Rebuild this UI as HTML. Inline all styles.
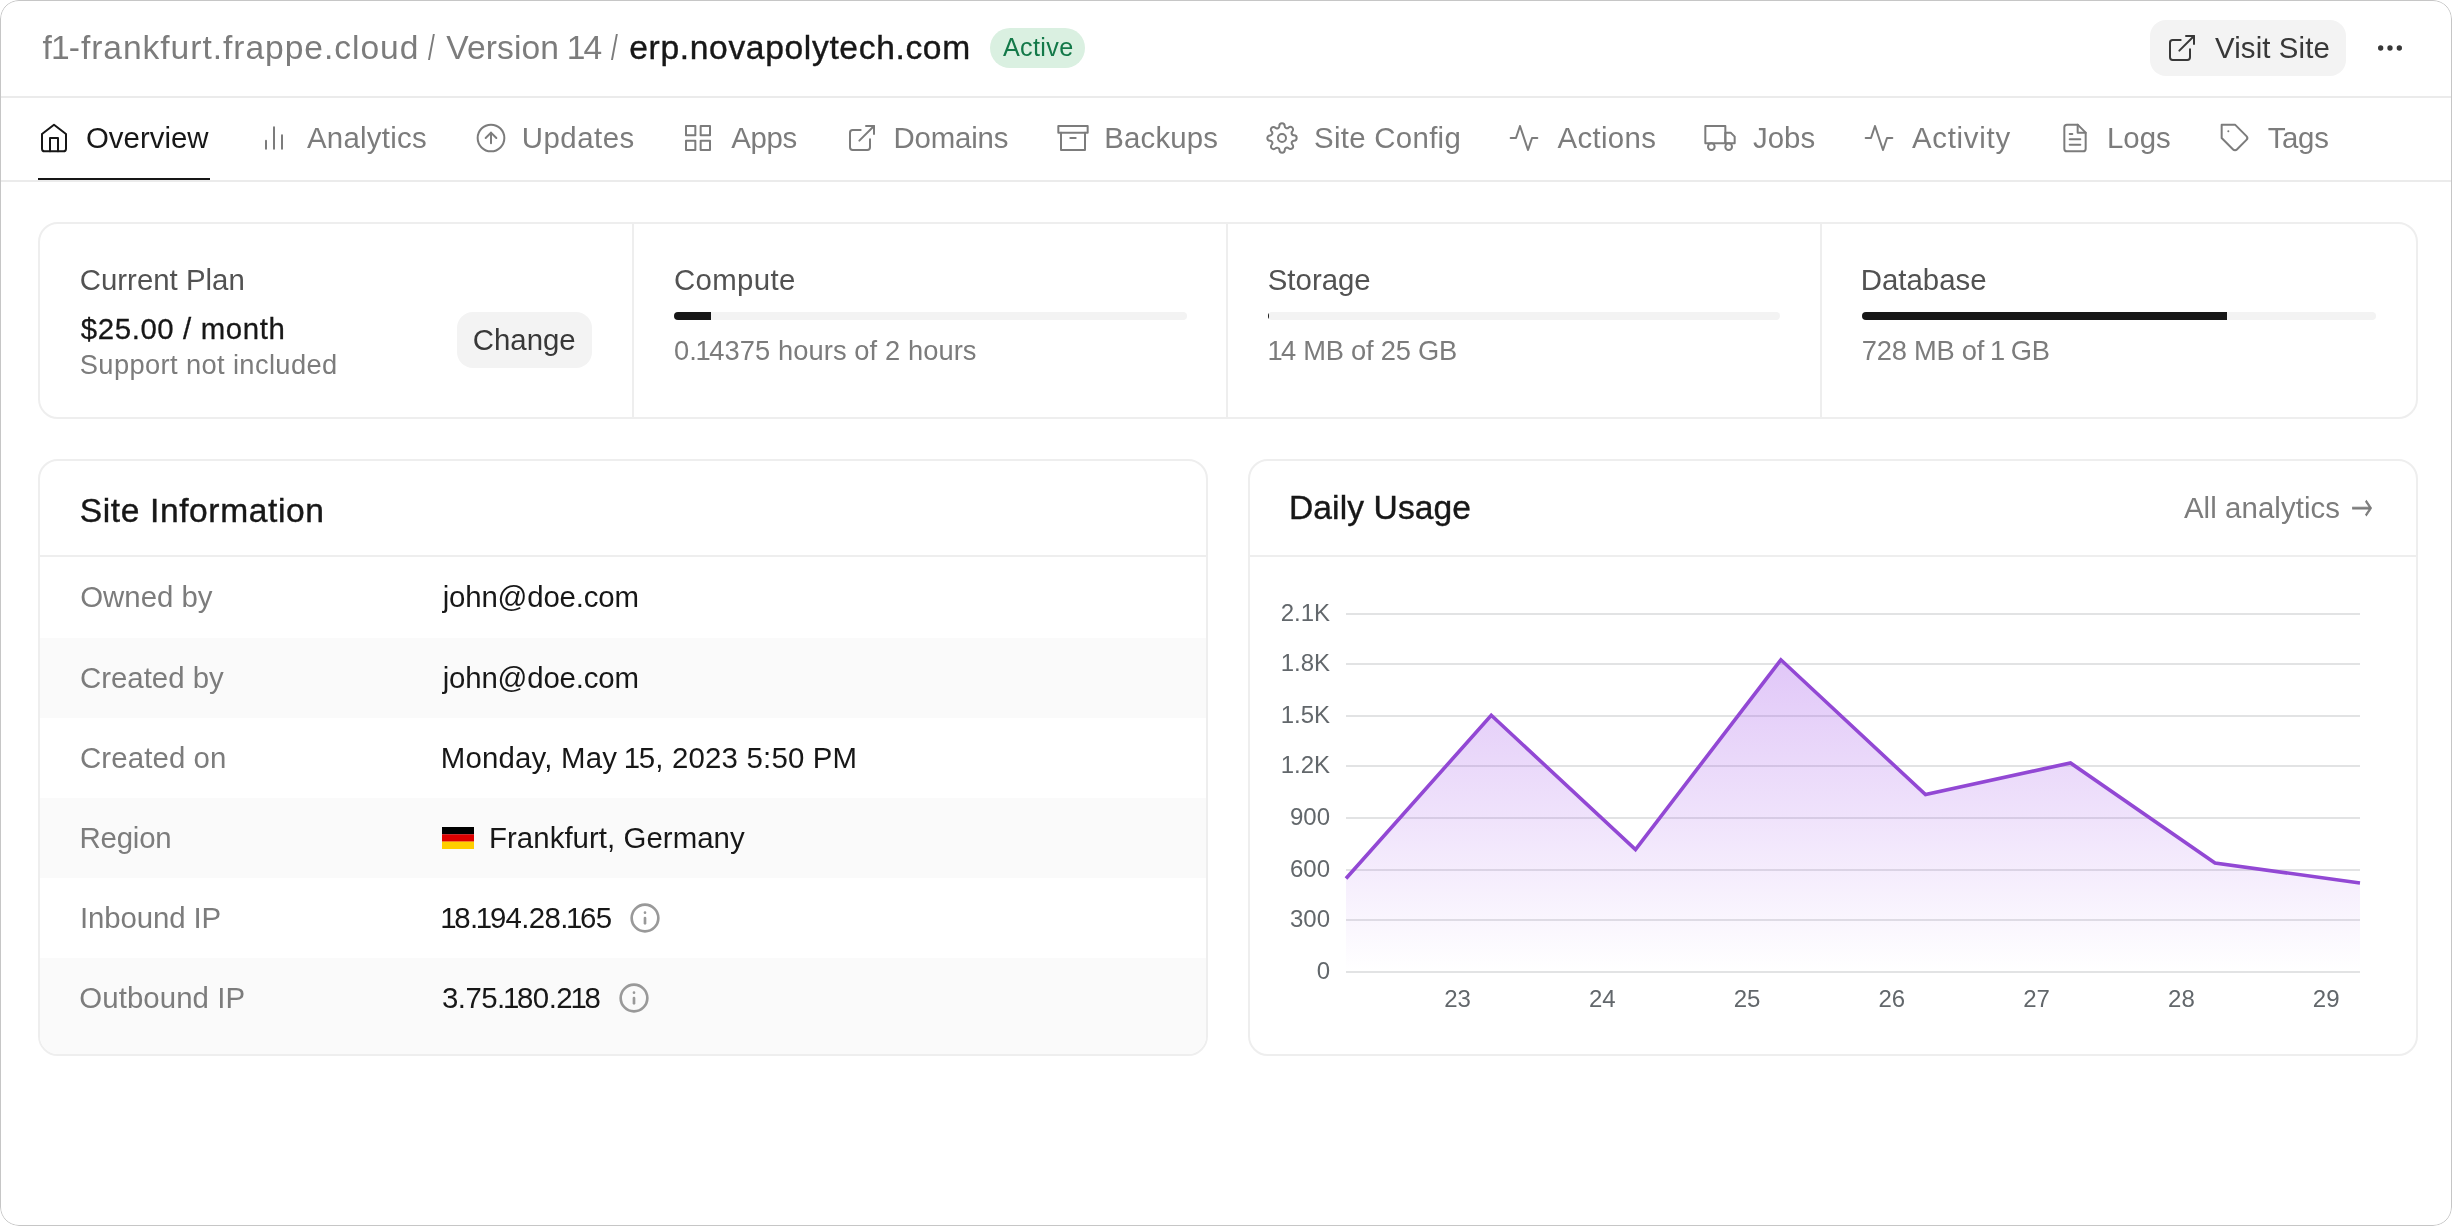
<!DOCTYPE html>
<html lang="en"><head><meta charset="utf-8"><title>erp.novapolytech.com - Overview</title>
<style>
*{box-sizing:border-box;margin:0;padding:0}
html,body{width:2452px;height:1226px;background:#fff;overflow:hidden}
body{font-family:"Liberation Sans",Arial,Helvetica,sans-serif;-webkit-font-smoothing:antialiased}
#app{position:relative;width:2452px;height:1226px;background:transparent;border-radius:19px;overflow:hidden;will-change:transform}
#frame{position:absolute;inset:0;border:1.3px solid #c6c6c6;border-radius:19px;pointer-events:none;z-index:9}
.t{position:absolute;white-space:nowrap;line-height:1}
.n1{margin:0 -0.055em}
.ic{position:absolute;display:block;overflow:visible}
header{position:absolute;left:0;top:0;width:2452px;height:98px;border-bottom:2px solid #ebebeb}
nav{position:absolute;left:0;top:98px;width:2452px;height:84px;border-bottom:2px solid #ebebeb}
nav .active-line{position:absolute;left:38px;top:80px;width:172px;height:2px;background:#171717}
a{color:inherit;text-decoration:none}
.badge{position:absolute;left:990px;top:28px;width:95px;height:40px;border-radius:20px;background:#daf0e1}
.btn{position:absolute;background:#f3f3f3;border-radius:16px}
.card{position:absolute;border:2px solid #eeeeee;border-radius:20px;background:#fff;overflow:hidden}
.vdiv{position:absolute;top:0;width:2px;height:100%;background:#eeeeee}
.bar{position:absolute;height:8px;border-radius:4px;background:#f3f3f3;overflow:hidden}
.bar i{position:absolute;left:0;top:0;height:8px;background:#171717;display:block}
.hdiv{position:absolute;left:0;width:100%;height:2px;background:#eeeeee}
.row-alt{position:absolute;left:0;width:100%;background:#fafafa}
.chart{position:absolute;display:block}
.chart text{font-family:"Liberation Sans",Arial,Helvetica,sans-serif;font-size:24px;fill:#62676b}
.ygrid line{stroke:#e2e3e4;stroke-width:2}
.flag{position:absolute;width:32px;height:22px}
.crumbs,.actions,.tab,.col,.row,.link{display:contents}
</style></head><body>
<div id="app">
<header>
<div class="crumbs">
<span class="t" id="bc1" style="left:42.50px;top:30.56px;font-size:33.6px;color:#7c7c7c;letter-spacing:0.959px">f<span class="n1">1</span>-frankfurt.frappe.cloud</span>
<span class="t" id="bc2" style="left:427.50px;top:30.37px;font-size:35px;color:#7c7c7c;letter-spacing:0.000px;transform:scaleX(.7);transform-origin:0 50%">/</span>
<span class="t" id="bc3" style="left:446.25px;top:30.56px;font-size:33.6px;color:#7c7c7c;letter-spacing:0.112px">Version <span class="n1">1</span>4</span>
<span class="t" id="bc4" style="left:611.30px;top:30.37px;font-size:35px;color:#7c7c7c;letter-spacing:0.000px;transform:scaleX(.7);transform-origin:0 50%">/</span>
<span class="t" id="bc5" style="left:629.30px;top:30.56px;font-size:33.6px;color:#171717;letter-spacing:0.651px;-webkit-text-stroke:0.4px currentColor">erp.novapolytech.com</span>
<div class="badge"></div><span class="t" id="badge" style="left:1002.90px;top:34.67px;font-size:25.2px;color:#137949;letter-spacing:0.360px">Active</span>
</div>
<div class="actions">
<div class="btn" style="left:2150px;top:20px;width:196px;height:56px"></div>
<svg class="ic" style="left:2166px;top:32px;color:#383838" width="32" height="32" viewBox="0 0 24 24" fill="none" stroke="currentColor" stroke-width="1.5" stroke-linecap="round" stroke-linejoin="round"><path d="M18 13v6a2 2 0 0 1-2 2H5a2 2 0 0 1-2-2V8a2 2 0 0 1 2-2h6"/><polyline points="15 3 21 3 21 9"/><line x1="10" y1="14" x2="21" y2="3"/></svg>
<span class="t" id="visit" style="left:2215.00px;top:33.11px;font-size:29.4px;color:#383838;letter-spacing:0.112px">Visit Site</span>
<svg class="ic" style="left:2374px;top:32px;color:#383838" width="32" height="32" viewBox="0 0 24 24" fill="none" stroke="currentColor" stroke-width="2" stroke-linecap="round" stroke-linejoin="round"><circle cx="12" cy="12" r="1"/><circle cx="19" cy="12" r="1"/><circle cx="5" cy="12" r="1"/></svg>
</div>
</header>
<nav>
<a class="tab active">
<svg class="ic" style="left:38px;top:24px;color:#171717" width="32" height="32" viewBox="0 0 24 24" fill="none" stroke="currentColor" stroke-width="1.5" stroke-linecap="round" stroke-linejoin="round"><path d="M3 9l9-7 9 7v11a2 2 0 0 1-2 2H5a2 2 0 0 1-2-2z"/><polyline points="9 22 9 12 15 12 15 22"/></svg>
<span class="t" id="tab0" style="left:86.00px;top:25.11px;font-size:29.4px;color:#171717;letter-spacing:0.000px">Overview</span>
</a>
<a class="tab">
<svg class="ic" style="left:258px;top:24px;color:#7c7c7c" width="32" height="32" viewBox="0 0 24 24" fill="none" stroke="currentColor" stroke-width="1.5" stroke-linecap="round" stroke-linejoin="round"><line x1="18" y1="20" x2="18" y2="10"/><line x1="12" y1="20" x2="12" y2="4"/><line x1="6" y1="20" x2="6" y2="14"/></svg>
<span class="t" id="tab1" style="left:307.00px;top:25.11px;font-size:29.4px;color:#7c7c7c;letter-spacing:0.250px">Analytics</span>
</a>
<a class="tab">
<svg class="ic" style="left:475px;top:24px;color:#7c7c7c" width="32" height="32" viewBox="0 0 24 24" fill="none" stroke="currentColor" stroke-width="1.5" stroke-linecap="round" stroke-linejoin="round"><circle cx="12" cy="12" r="10"/><polyline points="16 12 12 8 8 12"/><line x1="12" y1="16" x2="12" y2="8"/></svg>
<span class="t" id="tab2" style="left:521.75px;top:25.11px;font-size:29.4px;color:#7c7c7c;letter-spacing:0.503px">Updates</span>
</a>
<a class="tab">
<svg class="ic" style="left:682px;top:24px;color:#7c7c7c" width="32" height="32" viewBox="0 0 24 24" fill="none" stroke="currentColor" stroke-width="1.5" stroke-linecap="round" stroke-linejoin="round"><rect x="3" y="3" width="7" height="7"/><rect x="14" y="3" width="7" height="7"/><rect x="14" y="14" width="7" height="7"/><rect x="3" y="14" width="7" height="7"/></svg>
<span class="t" id="tab3" style="left:731.25px;top:25.11px;font-size:29.4px;color:#7c7c7c;letter-spacing:-0.335px">Apps</span>
</a>
<a class="tab">
<svg class="ic" style="left:846px;top:24px;color:#7c7c7c" width="32" height="32" viewBox="0 0 24 24" fill="none" stroke="currentColor" stroke-width="1.5" stroke-linecap="round" stroke-linejoin="round"><path d="M18 13v6a2 2 0 0 1-2 2H5a2 2 0 0 1-2-2V8a2 2 0 0 1 2-2h6"/><polyline points="15 3 21 3 21 9"/><line x1="10" y1="14" x2="21" y2="3"/></svg>
<span class="t" id="tab4" style="left:893.50px;top:25.11px;font-size:29.4px;color:#7c7c7c;letter-spacing:-0.166px">Domains</span>
</a>
<a class="tab">
<svg class="ic" style="left:1057px;top:24px;color:#7c7c7c" width="32" height="32" viewBox="0 0 24 24" fill="none" stroke="currentColor" stroke-width="1.5" stroke-linecap="round" stroke-linejoin="round"><polyline points="21 8 21 21 3 21 3 8"/><rect x="1" y="3" width="22" height="5"/><line x1="10" y1="12" x2="14" y2="12"/></svg>
<span class="t" id="tab5" style="left:1104.25px;top:25.11px;font-size:29.4px;color:#7c7c7c;letter-spacing:0.163px">Backups</span>
</a>
<a class="tab">
<svg class="ic" style="left:1266px;top:24px;color:#7c7c7c" width="32" height="32" viewBox="0 0 24 24" fill="none" stroke="currentColor" stroke-width="1.5" stroke-linecap="round" stroke-linejoin="round"><circle cx="12" cy="12" r="3"/><path d="M19.4 15a1.65 1.65 0 0 0 .33 1.82l.06.06a2 2 0 0 1 0 2.83 2 2 0 0 1-2.83 0l-.06-.06a1.65 1.65 0 0 0-1.82-.33 1.65 1.65 0 0 0-1 1.51V21a2 2 0 0 1-2 2 2 2 0 0 1-2-2v-.09A1.65 1.65 0 0 0 9 19.4a1.65 1.65 0 0 0-1.82.33l-.06.06a2 2 0 0 1-2.83 0 2 2 0 0 1 0-2.83l.06-.06a1.65 1.65 0 0 0 .33-1.82 1.65 1.65 0 0 0-1.51-1H3a2 2 0 0 1-2-2 2 2 0 0 1 2-2h.09A1.65 1.65 0 0 0 4.6 9a1.65 1.65 0 0 0-.33-1.82l-.06-.06a2 2 0 0 1 0-2.83 2 2 0 0 1 2.83 0l.06.06a1.65 1.65 0 0 0 1.82.33H9a1.65 1.65 0 0 0 1-1.51V3a2 2 0 0 1 2-2 2 2 0 0 1 2 2v.09a1.65 1.65 0 0 0 1 1.51 1.65 1.65 0 0 0 1.82-.33l.06-.06a2 2 0 0 1 2.83 0 2 2 0 0 1 0 2.83l-.06.06a1.65 1.65 0 0 0-.33 1.82V9a1.65 1.65 0 0 0 1.51 1H21a2 2 0 0 1 2 2 2 2 0 0 1-2 2h-.09a1.65 1.65 0 0 0-1.51 1z"/></svg>
<span class="t" id="tab6" style="left:1314.00px;top:25.11px;font-size:29.4px;color:#7c7c7c;letter-spacing:0.300px">Site Config</span>
</a>
<a class="tab">
<svg class="ic" style="left:1508px;top:24px;color:#7c7c7c" width="32" height="32" viewBox="0 0 24 24" fill="none" stroke="currentColor" stroke-width="1.5" stroke-linecap="round" stroke-linejoin="round"><polyline points="22 12 18 12 15 21 9 3 6 12 2 12"/></svg>
<span class="t" id="tab7" style="left:1557.50px;top:25.11px;font-size:29.4px;color:#7c7c7c;letter-spacing:0.333px">Actions</span>
</a>
<a class="tab">
<svg class="ic" style="left:1704px;top:24px;color:#7c7c7c" width="32" height="32" viewBox="0 0 24 24" fill="none" stroke="currentColor" stroke-width="1.5" stroke-linecap="round" stroke-linejoin="round"><rect x="1" y="3" width="15" height="13"/><polygon points="16 8 20 8 23 11 23 16 16 16 16 8"/><circle cx="5.5" cy="18.5" r="2.5"/><circle cx="18.5" cy="18.5" r="2.5"/></svg>
<span class="t" id="tab8" style="left:1753.00px;top:25.11px;font-size:29.4px;color:#7c7c7c;letter-spacing:0.000px">Jobs</span>
</a>
<a class="tab">
<svg class="ic" style="left:1863px;top:24px;color:#7c7c7c" width="32" height="32" viewBox="0 0 24 24" fill="none" stroke="currentColor" stroke-width="1.5" stroke-linecap="round" stroke-linejoin="round"><polyline points="22 12 18 12 15 21 9 3 6 12 2 12"/></svg>
<span class="t" id="tab9" style="left:1912.00px;top:25.11px;font-size:29.4px;color:#7c7c7c;letter-spacing:0.714px">Activity</span>
</a>
<a class="tab">
<svg class="ic" style="left:2059px;top:24px;color:#7c7c7c" width="32" height="32" viewBox="0 0 24 24" fill="none" stroke="currentColor" stroke-width="1.5" stroke-linecap="round" stroke-linejoin="round"><path d="M14 2H6a2 2 0 0 0-2 2v16a2 2 0 0 0 2 2h12a2 2 0 0 0 2-2V8z"/><polyline points="14 2 14 8 20 8"/><line x1="16" y1="13" x2="8" y2="13"/><line x1="16" y1="17" x2="8" y2="17"/><polyline points="10 9 9 9 8 9"/></svg>
<span class="t" id="tab10" style="left:2107.00px;top:25.11px;font-size:29.4px;color:#7c7c7c;letter-spacing:-0.004px">Logs</span>
</a>
<a class="tab">
<svg class="ic" style="left:2219px;top:24px;color:#7c7c7c" width="32" height="32" viewBox="0 0 24 24" fill="none" stroke="currentColor" stroke-width="1.5" stroke-linecap="round" stroke-linejoin="round"><path d="M20.59 13.41l-7.17 7.17a2 2 0 0 1-2.83 0L2 12V2h10l8.59 8.59a2 2 0 0 1 0 2.82z"/><line x1="7" y1="7" x2="7.01" y2="7"/></svg>
<span class="t" id="tab11" style="left:2267.75px;top:25.11px;font-size:29.4px;color:#7c7c7c;letter-spacing:-0.334px">Tags</span>
</a>
<div class="active-line"></div></nav>
<section class="card" style="left:38px;top:222px;width:2380px;height:197px">
<div class="col"><span class="t" id="p1" style="left:39.75px;top:41.11px;font-size:29.4px;color:#525252;letter-spacing:0.000px">Current Plan</span><span class="t" id="p2" style="left:40.75px;top:90.11px;font-size:29.4px;color:#171717;letter-spacing:0.615px;-webkit-text-stroke:0.28px currentColor">$25.00 / month</span><span class="t" id="p3" style="left:39.75px;top:126.89px;font-size:27.3px;color:#7c7c7c;letter-spacing:0.369px">Support not included</span>
<div class="btn" style="left:417px;top:88px;width:135px;height:56px"></div><span class="t" id="p4" style="left:432.75px;top:101.11px;font-size:29.4px;color:#383838;letter-spacing:0.000px">Change</span></div>
<div class="vdiv" style="left:592px"></div>
<div class="col"><span class="t" id="c1" style="left:634.00px;top:41.11px;font-size:29.4px;color:#525252;letter-spacing:0.333px">Compute</span><div class="bar" style="left:634px;top:88px;width:513px"><i style="width:37px"></i></div><span class="t" id="c2" style="left:634.00px;top:112.89px;font-size:27.3px;color:#7c7c7c;letter-spacing:0.086px">0.<span class="n1">1</span>4375 hours of 2 hours</span></div>
<div class="vdiv" style="left:1186px"></div>
<div class="col"><span class="t" id="s1" style="left:1227.75px;top:41.11px;font-size:29.4px;color:#525252;letter-spacing:0.004px">Storage</span><div class="bar" style="left:1228px;top:88px;width:512px"><i style="width:1px"></i></div><span class="t" id="s2" style="left:1229.00px;top:112.89px;font-size:27.3px;color:#7c7c7c;letter-spacing:-0.234px"><span class="n1">1</span>4 MB of 25 GB</span></div>
<div class="vdiv" style="left:1780px"></div>
<div class="col"><span class="t" id="d1" style="left:1820.75px;top:41.11px;font-size:29.4px;color:#525252;letter-spacing:0.004px">Database</span><div class="bar" style="left:1822px;top:88px;width:514px"><i style="width:365px"></i></div><span class="t" id="d2" style="left:1821.75px;top:112.89px;font-size:27.3px;color:#7c7c7c;letter-spacing:-0.228px">728 MB of <span class="n1">1</span> GB</span></div>
</section>
<section class="card" style="left:38px;top:459px;width:1170px;height:597px">
<span class="t" id="si" style="left:39.75px;top:32.56px;font-size:33.6px;color:#171717;letter-spacing:0.603px;-webkit-text-stroke:0.4px currentColor">Site Information</span>
<div class="hdiv" style="top:94px"></div>
<div class="row-alt" style="top:177px;height:80px"></div><div class="row-alt" style="top:337px;height:80px"></div><div class="row-alt" style="top:497px;height:100px"></div>
<div class="row"><span class="t" id="rl0" style="left:40.25px;top:121.11px;font-size:29.4px;color:#7c7c7c;letter-spacing:-0.004px">Owned by</span><span class="t" id="rv0" style="left:402.75px;top:121.11px;font-size:29.4px;color:#171717;letter-spacing:-0.178px">john@doe.com</span>
</div>
<div class="row"><span class="t" id="rl1" style="left:40.00px;top:202.11px;font-size:29.4px;color:#7c7c7c;letter-spacing:0.000px">Created by</span><span class="t" id="rv1" style="left:402.75px;top:202.11px;font-size:29.4px;color:#171717;letter-spacing:-0.178px">john@doe.com</span>
</div>
<div class="row"><span class="t" id="rl2" style="left:40.00px;top:282.11px;font-size:29.4px;color:#7c7c7c;letter-spacing:0.111px">Created on</span><span class="t" id="rv2" style="left:400.75px;top:282.11px;font-size:29.4px;color:#171717;letter-spacing:0.189px">Monday, May <span class="n1">1</span>5, 2023 5:50 PM</span>
</div>
<div class="row"><span class="t" id="rl3" style="left:39.50px;top:362.11px;font-size:29.4px;color:#7c7c7c;letter-spacing:-0.200px">Region</span><span class="t" id="rv3" style="left:449.00px;top:362.11px;font-size:29.4px;color:#171717;letter-spacing:0.052px">Frankfurt, Germany</span>
<svg class="flag" style="left:402px;top:366px" viewBox="0 0 32 22"><rect width="32" height="7.4" fill="#000"/><rect y="7.3" width="32" height="7.4" fill="#dd0000"/><rect y="14.6" width="32" height="7.4" fill="#ffce00"/></svg>
</div>
<div class="row"><span class="t" id="rl4" style="left:40.00px;top:442.11px;font-size:29.4px;color:#7c7c7c;letter-spacing:-0.111px">Inbound IP</span><span class="t" id="rv4" style="left:401.80px;top:442.11px;font-size:29.4px;color:#171717;letter-spacing:-0.667px"><span class="n1">1</span>8.<span class="n1">1</span>94.28.<span class="n1">1</span>65</span>
<svg class="ic" style="left:589px;top:441px;color:#999999" width="32" height="32" viewBox="0 0 24 24" fill="none" stroke="currentColor" stroke-width="2" stroke-linecap="round" stroke-linejoin="round"><circle cx="12" cy="12" r="10"/><line x1="12" y1="16" x2="12" y2="12"/><line x1="12" y1="8" x2="12.01" y2="8"/></svg>
</div>
<div class="row"><span class="t" id="rl5" style="left:39.30px;top:522.11px;font-size:29.4px;color:#7c7c7c;letter-spacing:0.080px">Outbound IP</span><span class="t" id="rv5" style="left:402.00px;top:522.11px;font-size:29.4px;color:#171717;letter-spacing:-0.568px">3.75.<span class="n1">1</span>80.2<span class="n1">1</span>8</span>
<svg class="ic" style="left:578px;top:521px;color:#999999" width="32" height="32" viewBox="0 0 24 24" fill="none" stroke="currentColor" stroke-width="2" stroke-linecap="round" stroke-linejoin="round"><circle cx="12" cy="12" r="10"/><line x1="12" y1="16" x2="12" y2="12"/><line x1="12" y1="8" x2="12.01" y2="8"/></svg>
</div>
</section>
<section class="card" style="left:1248px;top:459px;width:1170px;height:597px">
<span class="t" id="du" style="left:39.00px;top:29.56px;font-size:33.6px;color:#171717;letter-spacing:0.100px;-webkit-text-stroke:0.4px currentColor">Daily Usage</span><a class="link"><span class="t" id="aa" style="left:933.90px;top:32.11px;font-size:29.4px;color:#7c7c7c;letter-spacing:0.083px">All analytics</span><span class="t" id="arrow" style="left:1101.00px;top:26.83px;font-size:38px;color:#7c7c7c;letter-spacing:0.000px;font-family:'DejaVu Sans','Liberation Sans',sans-serif;font-weight:200;-webkit-text-stroke:.9px currentColor;transform:scaleX(.68);transform-origin:0 50%">→</span></a>
<div class="hdiv" style="top:94px"></div>
<svg class="chart" width="1166" height="498" viewBox="1250 557 1166 498" style="left:0px;top:96px">
<defs><linearGradient id="ug" x1="0" y1="0" x2="0" y2="1"><stop offset="0" stop-color="#9d4be8" stop-opacity="0.31"/><stop offset="0.5" stop-color="#9d4be8" stop-opacity="0.16"/><stop offset="1" stop-color="#9d4be8" stop-opacity="0"/></linearGradient></defs>
<g class="ygrid">
<line x1="1346" x2="2360" y1="972.00" y2="972.00"/>
<line x1="1346" x2="2360" y1="920.00" y2="920.00"/>
<line x1="1346" x2="2360" y1="870.00" y2="870.00"/>
<line x1="1346" x2="2360" y1="818.00" y2="818.00"/>
<line x1="1346" x2="2360" y1="766.00" y2="766.00"/>
<line x1="1346" x2="2360" y1="716.00" y2="716.00"/>
<line x1="1346" x2="2360" y1="664.00" y2="664.00"/>
<line x1="1346" x2="2360" y1="614.00" y2="614.00"/>
</g><g class="ylab">
<text x="1330" y="978.90" text-anchor="end">0</text>
<text x="1330" y="926.90" text-anchor="end">300</text>
<text x="1330" y="876.90" text-anchor="end">600</text>
<text x="1330" y="824.90" text-anchor="end">900</text>
<text x="1330" y="772.90" text-anchor="end">1.2K</text>
<text x="1330" y="722.90" text-anchor="end">1.5K</text>
<text x="1330" y="670.90" text-anchor="end">1.8K</text>
<text x="1330" y="620.90" text-anchor="end">2.1K</text>
</g>
<path d="M1346,878.5 L1491.25,715.3 L1635.5,849.5 L1780.9,659.8 L1925.5,794.6 L2070.5,762.9 L2215,863 L2360,883 L2360,972.0 L1346,972.0 Z" fill="url(#ug)"/>
<path d="M1346,878.5 L1491.25,715.3 L1635.5,849.5 L1780.9,659.8 L1925.5,794.6 L2070.5,762.9 L2215,863 L2360,883" fill="none" stroke="#9248d4" stroke-width="3.6" stroke-linejoin="miter"/>
<g class="xlab">
<text x="1457.50" y="1007" text-anchor="middle">23</text>
<text x="1602.28" y="1007" text-anchor="middle">24</text>
<text x="1747.06" y="1007" text-anchor="middle">25</text>
<text x="1891.84" y="1007" text-anchor="middle">26</text>
<text x="2036.62" y="1007" text-anchor="middle">27</text>
<text x="2181.40" y="1007" text-anchor="middle">28</text>
<text x="2326.18" y="1007" text-anchor="middle">29</text>
</g></svg>
</section>
<div id="frame"></div>
</div></body></html>
